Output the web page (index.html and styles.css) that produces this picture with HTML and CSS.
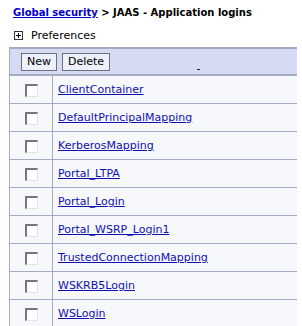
FILE: index.html
```html
<!DOCTYPE html>
<html lang="en">
<head>
    <meta charset="UTF-8">
    <title>JAAS - Application logins</title>
    <link rel="stylesheet" href="styles.css">
</head>
<body>
    <div class="title">
        <a href="#">Global security</a> &gt; JAAS - Application logins
    </div>
    <div class="prefs">
        <span class="plus-box">
            <svg width="9" height="9" viewBox="0 0 9 9">
                <rect x="0.5" y="0.5" width="8" height="8" fill="#fff" stroke="#333"/>
                <path d="M2 4.5h5M4.5 2v5" stroke="#000" stroke-width="1"/>
            </svg>
        </span>
        <span>Preferences</span>
    </div>
    <table class="logins">
        <tr class="toolbar">
            <td colspan="2">
                <button>New</button><button>Delete</button>
                <span class="sort-mark"></span>
            </td>
        </tr>
        <tr><td class="check"><span class="box"></span></td><td class="name"><a href="#">ClientContainer</a></td></tr>
        <tr><td class="check"><span class="box"></span></td><td class="name"><a href="#">DefaultPrincipalMapping</a></td></tr>
        <tr><td class="check"><span class="box"></span></td><td class="name"><a href="#">KerberosMapping</a></td></tr>
        <tr><td class="check"><span class="box"></span></td><td class="name"><a href="#">Portal_LTPA</a></td></tr>
        <tr><td class="check"><span class="box"></span></td><td class="name"><a href="#">Portal_Login</a></td></tr>
        <tr><td class="check"><span class="box"></span></td><td class="name"><a href="#">Portal_WSRP_Login1</a></td></tr>
        <tr><td class="check"><span class="box"></span></td><td class="name"><a href="#">TrustedConnectionMapping</a></td></tr>
        <tr><td class="check"><span class="box"></span></td><td class="name"><a href="#">WSKRB5Login</a></td></tr>
        <tr><td class="check"><span class="box"></span></td><td class="name"><a href="#">WSLogin</a></td></tr>
    </table>
</body>
</html>
```

FILE: styles.css
```css
body {
    margin: 0;
    padding: 0;
    background: #fff;
    font-family: 'DejaVu Sans', Verdana, sans-serif;
    font-size: 11px;
    color: #000;
    overflow: hidden;
}
a {
    color: #1010b0;
}
.title {
    font-weight: bold;
    font-size: 10px;
    padding: 7px 0 0 13px;
    height: 20px;
}
.title a {
    color: #0000cc;
}
.prefs {
    display: flex;
    align-items: center;
    padding-left: 14px;
    height: 16px;
    font-size: 11px;
}
.plus-box {
    display: flex;
    margin-right: 8px;
}
.logins {
    margin: 4px 0 0 9px;
    width: 288px;
    border-collapse: collapse;
    border-left: 1px solid #a4abc2;
}
.toolbar td {
    background: #d6daf2;
    border-top: 2px solid #a4abc2;
    border-bottom: 2px solid #a4abc2;
    height: 25px;
    padding: 0 0 0 11px;
    position: relative;
}
.toolbar button {
    font-family: 'DejaVu Sans', Verdana, sans-serif;
    font-size: 11px;
    height: 18px;
    padding: 0 5px;
    margin-right: 5px;
    background: #eef0fa;
    border: 1px solid #6b6f80;
    border-radius: 0;
    color: #000;
}
.sort-mark {
    position: absolute;
    left: 187px;
    bottom: 4px;
    width: 3px;
    height: 1px;
    background: #223;
}
.logins td.check,
.logins td.name {
    height: 27px;
    border-bottom: 1px solid #a4abc2;
    background: #f7f8fb;
}
.check {
    width: 42px;
    border-right: 1px solid #a4abc2;
    text-align: center;
    padding: 0;
}
.name {
    padding: 0 0 0 5px;
}
.box {
    display: inline-block;
    width: 10px;
    height: 10px;
    margin-top: 4px;
    background: #fff;
    border-top: 2px solid #777;
    border-left: 2px solid #777;
    border-right: 1px solid #e4e4e4;
    border-bottom: 1px solid #e4e4e4;
}
```
